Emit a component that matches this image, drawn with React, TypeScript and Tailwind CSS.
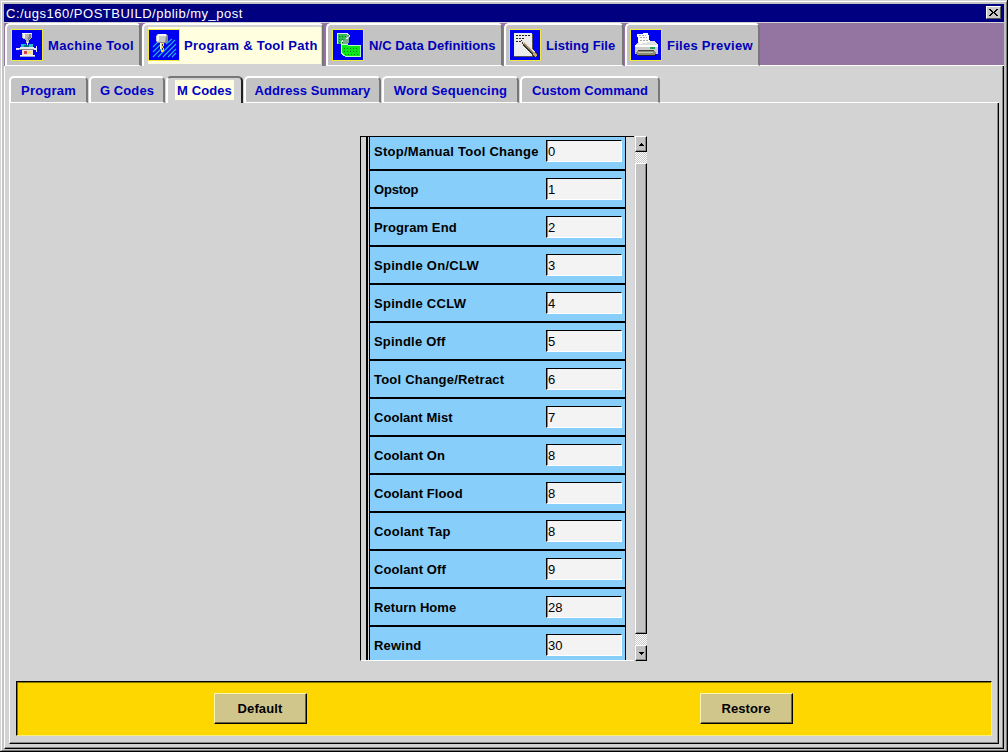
import type { ReactNode } from "react";

const px = "shrink-0";

function MachineIcon() {
  return (
    <svg width="30" height="30" viewBox="1 1 30 30" shapeRendering="crispEdges" className={px}>
      <path d="M11 4h10v5l-3 2v3h-3v-3l-4-2z" fill="#b8b8b8" />
      <path d="M11 4h10v1h-10zM12 5h2v4h-2z" fill="#f4f4f4" />
      <path d="M18 5h2v4l-3 2z" fill="#808080" />
      <path d="M16 13h1v4h-1z" fill="#fff" />
      <path d="M10 15h5v3h-5zM18 15h4v3h-4z" fill="#20c0c8" />
      <path d="M13 16h5v2h-5z" fill="#087888" />
      <path d="M5 19h21v2h-21zM9 18h14v1h-14zM25 17h1v6h-1z" fill="#e8e8f4" />
      <path d="M8 20h15v1h-15z" fill="#888" />
      <path d="M11 21h11v5h-11z" fill="#f4dfe0" />
      <path d="M13 22h3v3h-3z" fill="#d84050" />
      <path d="M17 22h3v3h-3z" fill="#f4df70" />
      <path d="M9 26h15v1h-15z" fill="#f0f0f0" />
      <path d="M9 27h15v1h-15z" fill="#98a8c0" />
    </svg>
  );
}

function ToolPathIcon() {
  return (
    <svg width="30" height="30" viewBox="1 1 30 30" className={px}>
      <path d="M5 18l7-7M5 23l7-7M5 28l9-9M10 28l17-17M15 28l13-13M20 28l8-8M18 15l6-5M24 28l4-4" stroke="#28b0e0" strokeWidth="1.1" fill="none" />
      <path d="M10 5h8l2 2v5l-2 2h-8l-2-2v-5z" fill="#c8c8c8" />
      <path d="M10 5h8v2h-7v5h-2v-5z" fill="#f4f4f4" />
      <path d="M18 7h2v5l-2 2h-8v-1h7z" fill="#888" />
      <path d="M13 14h3v8l-1 1h-2z" fill="#f4dc40" />
      <path d="M14 15h1v2h-1zM15 17h1v2h-1zM14 19h1v2h-1z" fill="#473d20" />
      <path d="M12 14h1v6h-1z" fill="#fff" />
    </svg>
  );
}

function TapeIcon() {
  return (
    <svg width="30" height="30" viewBox="1 1 30 30" shapeRendering="crispEdges" className={px}>
      <path d="M5 4h10l2 2v7l-3 2h-9z" fill="#30bd50" />
      <path d="M13 6l4 1v6l-4 4h-3v-4l3-3z" fill="#78a890" />
      <path d="M5 15v-11h9l3 2v2l-3 2M11 11l-2 3v4" stroke="#d8f0e8" fill="none" />
      <path d="M9 16h19v11h-15l-4-3z" fill="#08e818" />
      <path d="M9 15h5l2 1h12M28 16v11h-15l-4-3v-8" stroke="#b8ffb8" fill="none" />
      <path d="M7 7h8M7 10h5M7 13h5M12 19h15M12 22h15M13 25h14" stroke="#067020" strokeDasharray="1 2" fill="none" />
    </svg>
  );
}

function ListingIcon() {
  return (
    <svg width="30" height="30" viewBox="1 1 30 30" shapeRendering="crispEdges" className={px}>
      <path d="M5 5h19v23h-19z" fill="#555" />
      <path d="M5 4h18v23h-18z" fill="#ececec" />
      <path d="M7 6.500h14M7 9.500h8M7 12.500h5" stroke="#222" strokeDasharray="2 1" fill="none" />
      <path d="M12 11l4 2 12 11v4h-3L14 16z" fill="#343434" />
      <path d="M13 11l3 2 10 10-2 2-10-10z" fill="#e8ded0" />
      <path d="M14 15l10 10 1-1-10-10z" fill="#a08860" />
      <path d="M25 23l3 3-2 2-3-3z" fill="#c0aa70" />
    </svg>
  );
}

function PrinterIcon() {
  return (
    <svg width="30" height="30" viewBox="1 1 30 30" shapeRendering="crispEdges" className={px}>
      <path d="M6 15l3-3h16l3 4v2h-23z" fill="#dedede" />
      <path d="M7 5l11-1 2 9-11 2z" fill="#fff" />
      <path d="M9 7l7-1M10 9l7-1M10 12l8-1" stroke="#aaa" strokeDasharray="2 1" fill="none" />
      <path d="M5 17h23v8h-23z" fill="#cdcdcd" />
      <path d="M5 16h23v2h-23z" fill="#fff" />
      <path d="M20 18h5v2h-5z" fill="#20a050" />
      <path d="M8 21h16v1h-16z" fill="#444" />
      <path d="M7 22h17l2 2-2 2h-17l-2-2z" fill="#8c8c78" />
      <path d="M8 23h15v1h-15z" fill="#c8c8b0" />
      <path d="M7 26h18v1h-18z" fill="#222" />
    </svg>
  );
}

type MainTab = { label: string; icon: ReactNode; box: string; text: string; active?: boolean };

const mainTabs: MainTab[] = [
  { label: "Machine Tool", icon: <MachineIcon />, box: "w-[136px] pl-1", text: "tracking-[0.32px]" },
  { label: "Program & Tool Path", icon: <ToolPathIcon />, box: "ml-[1px] w-[182px] pl-[4px]", text: "-ml-px tracking-[0.28px]", active: true },
  { label: "N/C Data Definitions", icon: <TapeIcon />, box: "ml-[2px] w-[177px] pl-1", text: "tracking-[0.08px]" },
  { label: "Listing File", icon: <ListingIcon />, box: "ml-px w-[120px] pl-[3px]", text: "tracking-[0.06px]" },
  { label: "Files Preview", icon: <PrinterIcon />, box: "ml-px w-[135px] pl-[3px]", text: "tracking-[0.26px]" },
];

const subTabs = [
  { label: "Program", box: "w-[79px]", text: "tracking-[0.2px]" },
  { label: "G Codes", box: "ml-[1px] w-[76px]", text: "tracking-[0.1px]" },
  { label: "M Codes", box: "ml-px w-[77px]", text: "tracking-[0.1px]", active: true },
  { label: "Address Summary", box: "ml-px w-[137px]", text: "tracking-[0.06px]" },
  { label: "Word Sequencing", box: "ml-px w-[137px]", text: "tracking-[0.22px]" },
  { label: "Custom Command", box: "ml-px w-[140px]", text: "tracking-[0.02px]" },
];

const codes: [string, string, string][] = [
  ["Stop/Manual Tool Change", "0", "tracking-[0.26px]"],
  ["Opstop", "1", "tracking-[-0.2px]"],
  ["Program End", "2", "tracking-[0.1px]"],
  ["Spindle On/CLW", "3", "tracking-[0.28px]"],
  ["Spindle CCLW", "4", "tracking-[0.28px]"],
  ["Spindle Off", "5", "tracking-[0.2px]"],
  ["Tool Change/Retract", "6", "tracking-[0.22px]"],
  ["Coolant Mist", "7", "tracking-[0.05px]"],
  ["Coolant On", "8", "tracking-[0.1px]"],
  ["Coolant Flood", "8", "tracking-[0.1px]"],
  ["Coolant Tap", "8", "tracking-[0.22px]"],
  ["Coolant Off", "9", "tracking-[0.1px]"],
  ["Return Home", "28", "tracking-[0.06px]"],
  ["Rewind", "30", "tracking-[0.2px]"],
];

function MainTabs() {
  return (
    <div className="flex h-[43px] shrink-0 items-stretch bg-[#9474a0] pl-px">
      {mainTabs.map((t) => (
        <div
          key={t.label}
          className={`flex shrink-0 rounded-t-[5px] border-t-2 border-r-2 border-l-2 border-t-white border-r-[#777] border-l-white ${
            t.active ? "bg-[#d3d3d3] pt-[2px] pr-[1px] pb-[2px]" : "border-b border-b-white bg-[#c3c3c3] pt-1"
          } ${t.box}`}
        >
          <div className={`flex min-w-0 flex-1 ${t.active ? "bg-[#ffffe0] pt-[2px]" : ""}`}>
            <div className="size-8 shrink-0 border border-[#f0e840] bg-[#0000f0]">{t.icon}</div>
            <div className="mt-[9px] ml-[5px] h-4">
              <span className={`block leading-4 whitespace-nowrap text-[#0000b8] ${t.text}`}>{t.label}</span>
            </div>
          </div>
        </div>
      ))}
      <div className="flex-1 border-b border-white" />
    </div>
  );
}

function SubTabs() {
  return (
    <div className="flex h-[27px] shrink-0 pl-[3px]">
      {subTabs.map((t) => (
        <div
          key={t.label}
          className={`flex shrink-0 justify-center rounded-t-[5px] border-t-2 border-r-2 border-l-2 border-l-white pt-[2px] ${
            t.active ? "border-t-[#777] border-r-[#222] bg-[#d3d3d3]" : "border-b border-t-white border-r-[#777] border-b-white bg-[#c3c3c3]"
          } ${t.box}`}
        >
          <span className={`h-[20px] px-[2px] leading-[21px] whitespace-nowrap text-[#0000c8] ${t.active ? "bg-[#ffffe0]" : ""} ${t.text}`}>
            {t.label}
          </span>
        </div>
      ))}
      <div className="flex-1 border-b border-white" />
    </div>
  );
}

function ArrowButton({ down }: { down?: boolean }) {
  return (
    <div className="flex h-4 w-full shrink-0 items-center justify-center border-t border-r border-b border-l border-t-white border-r-black border-b-black border-l-white bg-[#c3c3c3] shadow-[inset_-1px_-1px_0_#888]">
      <svg width="5" height="3" viewBox="0 0 5 3" shapeRendering="crispEdges">
        <path d={down ? "M0 0h5v1h-1v1h-1v1h-1v-1h-1v-1h-1z" : "M2 0h1v1h1v1h1v1h-5v-1h1v-1h1z"} />
      </svg>
    </div>
  );
}

function CodeList() {
  return (
    <div className="ml-[344px] flex h-[525px] w-[287px]">
      <div className="flex w-[274px] shrink-0 overflow-hidden border-t border-b border-l border-t-black border-b-white border-l-black">
        <div className="ml-[5px] w-[2px] shrink-0 bg-black" />
        <div className="ml-px w-[257px] shrink-0 border-x border-black bg-[#87cefa]">
          <div className="-mt-1">
            {codes.map(([label, value, tracking]) => (
              <div key={label} className="flex h-[38px] items-start border-b-2 border-black pt-[7px] pl-1">
                <span className={`w-[172px] shrink-0 leading-[23px] whitespace-nowrap ${tracking}`}>{label}</span>
                <div className="h-[22px] w-[76px] border-t border-r border-b border-l border-t-black border-r-white border-b-white border-l-black bg-[#f3f3f3] pl-px font-normal leading-[22px] shadow-[inset_1px_0_0_#888]">
                  {value}
                </div>
              </div>
            ))}
          </div>
        </div>
        <div className="flex-1 bg-[#d9d9d9]" />
      </div>
      <div className="ml-px flex flex-1 flex-col">
        <ArrowButton />
        <div className="h-[11px] bg-[repeating-conic-gradient(#fff_0_25%,#c8c8c8_0_50%)] bg-[length:2px_2px]" />
        <div className="flex-1 border-t border-r border-b border-l border-t-white border-r-black border-b-black border-l-white bg-[#c3c3c3] shadow-[inset_-1px_-1px_0_#888]" />
        <div className="h-[11px] bg-[repeating-conic-gradient(#fff_0_25%,#c8c8c8_0_50%)] bg-[length:2px_2px]" />
        <ArrowButton down />
      </div>
    </div>
  );
}

function ActionButton({ children }: { children: string }) {
  return (
    <button className="h-[31px] w-[93px] border-t border-r border-b border-l border-t-[#fff6b0] border-r-black border-b-black border-l-[#fff6b0] bg-[#d0c68c] pr-px tracking-[0.1px] shadow-[inset_-1px_-1px_0_#6b6440]">
      {children}
    </button>
  );
}

export default function App() {
  return (
    <div className="flex h-[752px] w-[1008px] flex-col overflow-hidden border-r border-b border-black bg-[#c3c3c3] font-['Liberation_Sans',sans-serif] text-[13px] font-bold text-black">
      <div className="flex flex-1 flex-col border-t border-l border-[#d3d3d3]">
        <div className="flex flex-1 flex-col border-t border-r border-b border-l border-t-white border-r-[#777] border-b-[#777] border-l-white pt-[2px] pr-[2px] pb-[1px] pl-[2px]">
          <div className="flex h-[18px] shrink-0 items-start justify-between bg-[#000080] pr-[3px] pl-[2px]">
            <span className="font-normal leading-[19px] tracking-[0.5px] text-white">C:/ugs160/POSTBUILD/pblib/my_post</span>
            <button className="mt-[2px] flex h-[13px] w-[15px] items-center justify-center border-t border-r border-b border-l border-t-white border-r-[#555] border-b-[#555] border-l-white bg-[#c8c8c8]">
              <svg width="9" height="7" viewBox="0 0 9 7" shapeRendering="crispEdges">
                <path d="M0 0h2v1h1v1h1v1h1v-1h1v-1h1v-1h2v1h-1v1h-1v1h-1v1h1v1h1v1h1v1h-2v-1h-1v-1h-1v-1h-1v1h-1v1h-1v1h-2v-1h1v-1h1v-1h1v-1h-1v-1h-1v-1h-1z" />
              </svg>
            </button>
          </div>
          <div className="h-px shrink-0 bg-[#d3d3d3]" />
          <MainTabs />
          <div className="flex flex-1 flex-col border-r border-b border-l border-r-black border-b-black border-l-white bg-[#d3d3d3] pt-[10px] pr-[4px] pb-[4px] pl-px shadow-[inset_-1px_-1px_0_#888]">
            <SubTabs />
            <div className="ml-[3px] flex flex-1 flex-col border-r border-b border-l border-r-black border-b-black border-l-white pt-[33px] pr-[6px] pb-[6px] pl-[6px] shadow-[inset_-1px_-1px_0_#888]">
              <CodeList />
              <div className="mt-5 flex h-[55px] items-start border-t border-r border-b border-l border-t-black border-r-[#ffef80] border-b-[#ffef80] border-l-black bg-[#ffd700] pt-[11px] pl-[197px] shadow-[inset_1px_1px_0_#8a7400]">
                <ActionButton>Default</ActionButton>
                <div className="w-[393px]" />
                <ActionButton>Restore</ActionButton>
              </div>
            </div>
          </div>
        </div>
      </div>
    </div>
  );
}
